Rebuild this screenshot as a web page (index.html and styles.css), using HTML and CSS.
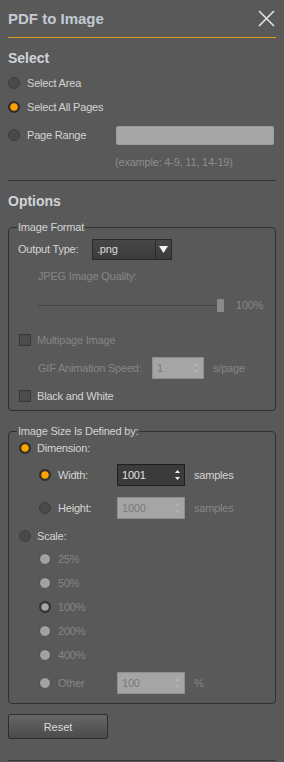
FILE: index.html
```html
<!DOCTYPE html>
<html lang="en">
<head>
    <meta charset="UTF-8">
    <meta name="viewport" content="width=device-width, initial-scale=1.0">
    <title>PDF to Image</title>
    <link rel="stylesheet" href="styles.css">
</head>
<body>
    <div class="panel">
        <header class="title-bar">
            <h1>PDF to Image</h1>
            <button class="close" title="Close">
                <svg width="17" height="17" viewBox="0 0 17 17"><path d="M1 1 L16 16 M16 1 L1 16" stroke="#e2e2e2" stroke-width="1.6" fill="none"/></svg>
            </button>
        </header>

        <h2 class="section-title">Select</h2>
        <label class="row sel r-area"><span class="radio"></span>Select Area</label>
        <label class="row sel"><span class="radio on"></span>Select All Pages</label>
        <div class="row sel r-range">
            <label class="range-label"><span class="radio"></span>Page Range</label>
            <input type="text" class="range-input">
        </div>
        <div class="example">(example: 4-9, 11, 14-19)</div>

        <hr class="divider">

        <h2 class="section-title">Options</h2>

        <fieldset class="group fmt">
            <legend>Image Format</legend>
            <div class="row r-out">
                <span class="out-label">Output Type:</span>
                <div class="dropdown">
                    <span class="dropdown-value">.png</span>
                    <span class="dropdown-btn">
                        <svg width="9" height="7" viewBox="0 0 9 7"><path d="M0 0 H9 L4.5 7 Z" fill="#f2f2f2"/></svg>
                    </span>
                </div>
            </div>
            <div class="row r-jpeg disabled">JPEG Image Quality:</div>
            <div class="row r-slider">
                <div class="slider"><span class="thumb"></span></div>
                <span class="slider-val disabled">100%</span>
            </div>
            <label class="row r-multi disabled"><span class="check"></span>Multipage Image</label>
            <div class="row r-gif">
                <span class="gif-label disabled">GIF Animation Speed:</span>
                <div class="spin off gif-spin">
                    <span class="spin-val">1</span>
                    <span class="spin-arrows">
                        <svg width="7" height="14" viewBox="0 0 7 14"><path d="M1 5 L3.5 2 L6 5 Z M1 9 L3.5 12 L6 9 Z" fill="#b4b4b4"/></svg>
                    </span>
                </div>
                <span class="unit disabled">s/page</span>
            </div>
            <label class="row r-bw"><span class="check"></span>Black and White</label>
        </fieldset>

        <fieldset class="group size">
            <legend>Image Size Is Defined by:</legend>
            <label class="row r-dim"><span class="radio on"></span>Dimension:</label>
            <div class="row sub r-width">
                <label class="sub-label"><span class="radio on"></span>Width:</label>
                <div class="spin">
                    <span class="spin-val">1001</span>
                    <span class="spin-arrows">
                        <svg width="7" height="14" viewBox="0 0 7 14"><path d="M1 5 L3.5 2 L6 5 Z M1 9 L3.5 12 L6 9 Z" fill="#f0f0f0"/></svg>
                    </span>
                </div>
                <span class="unit">samples</span>
            </div>
            <div class="row sub r-height">
                <label class="sub-label"><span class="radio"></span>Height:</label>
                <div class="spin off">
                    <span class="spin-val">1000</span>
                    <span class="spin-arrows">
                        <svg width="7" height="14" viewBox="0 0 7 14"><path d="M1 5 L3.5 2 L6 5 Z M1 9 L3.5 12 L6 9 Z" fill="#b4b4b4"/></svg>
                    </span>
                </div>
                <span class="unit disabled">samples</span>
            </div>
            <label class="row r-scale"><span class="radio"></span>Scale:</label>
            <label class="row sub scale-opt r-first disabled"><span class="radio off"></span>25%</label>
            <label class="row sub scale-opt disabled"><span class="radio off"></span>50%</label>
            <label class="row sub scale-opt disabled"><span class="radio off on"></span>100%</label>
            <label class="row sub scale-opt disabled"><span class="radio off"></span>200%</label>
            <label class="row sub scale-opt disabled"><span class="radio off"></span>400%</label>
            <div class="row sub r-other">
                <label class="sub-label disabled"><span class="radio off"></span>Other</label>
                <div class="spin off">
                    <span class="spin-val">100</span>
                    <span class="spin-arrows">
                        <svg width="7" height="14" viewBox="0 0 7 14"><path d="M1 5 L3.5 2 L6 5 Z M1 9 L3.5 12 L6 9 Z" fill="#b4b4b4"/></svg>
                    </span>
                </div>
                <span class="unit disabled">%</span>
            </div>
        </fieldset>

        <button class="reset">Reset</button>

        <hr class="divider bottom">
    </div>
</body>
</html>
```

FILE: styles.css
```css
* {
    box-sizing: border-box;
}
body {
    margin: 0;
    background-color: #595959;
    color: #d4d4d4;
    font-family: "Liberation Sans", Arial, sans-serif;
    font-size: 11px;
    letter-spacing: -0.2px;
}
.panel {
    padding: 0 8px;
}
.title-bar {
    height: 38px;
    display: flex;
    align-items: center;
    justify-content: space-between;
    border-bottom: 1px solid #e39a20;
}
.title-bar h1 {
    margin: 0;
    font-size: 15px;
    font-weight: bold;
    letter-spacing: 0;
    color: #c3cad2;
}
.close {
    background: none;
    border: none;
    padding: 0;
    margin-right: 1px;
    display: flex;
    cursor: pointer;
}
.section-title {
    margin: 10px 0 0;
    font-size: 14px;
    line-height: 20px;
    font-weight: bold;
    letter-spacing: 0;
    color: #cfd4d9;
}
.row {
    display: flex;
    align-items: center;
    height: 24px;
}
.sel .radio {
    margin-right: 7px;
}
.r-area { margin-top: 3px; }
.r-range { margin-top: 4px; }
.range-label {
    display: flex;
    align-items: center;
    width: 108px;
}
.range-input {
    width: 158px;
    height: 19px;
    border: 1px solid #9c9c9c;
    border-radius: 2px;
    background-color: #a6a6a6;
}
.example {
    margin-top: 5px;
    height: 20px;
    line-height: 20px;
    padding-left: 107px;
    color: #8c8c8c;
}
.divider {
    margin: 8px 0 0;
    border: none;
    border-top: 1px solid #343434;
}
.divider.bottom {
    margin-top: 21px;
}

/* radios and checkboxes */
.radio {
    flex: none;
    width: 12px;
    height: 12px;
    border-radius: 50%;
    background-color: #4a4a4a;
    border: 1px solid #3e3e3e;
}
.radio.on {
    border: 2px solid #2f2f2f;
    background: radial-gradient(circle, #ffa300 0 3.4px, #6b4a10 4px);
}
.radio.off {
    background-color: #a2a2a2;
    border: 1px solid #4c4c4c;
}
.radio.off.on {
    border: 2px solid #333;
    background: radial-gradient(circle, #a8a8a8 0 3px, #6e6e6e 4px);
}
.check {
    flex: none;
    width: 12px;
    height: 12px;
    margin: 0 6px 0 1px;
    background-color: #4c4c4c;
    border: 1px solid #383838;
}
.disabled {
    color: #868686;
}

/* groups */
.group {
    margin: 9px 0 0;
    padding: 0 8px 2px 9px;
    border: 1px solid #303030;
    border-radius: 4px;
    min-width: 0;
}
.group legend {
    padding: 0 1px;
    margin-left: -1px;
    line-height: 14px;
    font-size: 11px;
}
.size {
    margin-top: 13px;
    padding-bottom: 9px;
}
.r-out { margin-top: 3px; }
.out-label {
    width: 74px;
}
.dropdown {
    display: flex;
    width: 80px;
    height: 21px;
    border: 1px solid #2a2a2a;
    background: linear-gradient(#474747, #3b3b3b);
}
.dropdown-value {
    flex: 1;
    padding-left: 4px;
    line-height: 19px;
    color: #dcdcdc;
}
.dropdown-btn {
    width: 16px;
    border-left: 1px solid #2a2a2a;
    display: flex;
    align-items: center;
    justify-content: center;
}
.r-jpeg {
    margin-top: 3px;
    padding-left: 20px;
}
.r-slider {
    margin-top: 5px;
    padding-left: 20px;
}
.slider {
    position: relative;
    width: 187px;
    height: 13px;
    background: linear-gradient(transparent 6px, #444 6px, #444 7px, transparent 7px);
}
.thumb {
    position: absolute;
    left: 179px;
    top: 0;
    width: 7px;
    height: 13px;
    border-radius: 1px;
    background-color: #8a8a8a;
}
.slider-val {
    margin-left: 11px;
}
.r-multi { margin-top: 11px; }
.r-gif { margin-top: 4px; }
.gif-label {
    padding-left: 20px;
    width: 134px;
}
.r-bw { margin-top: 4px; }

/* spin boxes */
.spin {
    display: flex;
    align-items: center;
    width: 68px;
    height: 22px;
    border: 1px solid #1f1f1f;
    background-color: #3b3b3b;
    color: #e0e0e0;
}
.spin.off {
    border-color: #8e8e8e;
    background-color: #a5a5a5;
    color: #7a7a7a;
}
.gif-spin {
    width: 52px;
}
.spin-val {
    flex: 1;
    padding-left: 4px;
}
.spin-arrows {
    display: flex;
    width: 14px;
    justify-content: center;
}
.unit {
    margin-left: 9px;
}

.r-dim {
    height: 20px;
}
.r-dim .radio,
.r-scale .radio {
    margin: 0 6px 0 1px;
}
.sub {
    padding-left: 21px;
}
.sub .radio {
    margin-right: 7px;
}
.sub-label {
    display: flex;
    align-items: center;
    width: 78px;
}
.r-width {
    height: 22px;
    margin-top: 6px;
}
.r-height {
    height: 22px;
    margin-top: 11px;
}
.r-scale {
    height: 20px;
    margin-top: 7px;
}
.scale-opt {
    height: 20px;
    margin-top: 4px;
}
.scale-opt.r-first {
    margin-top: 3px;
}
.r-other {
    height: 22px;
    margin-top: 7px;
}

.reset {
    display: block;
    margin-top: 10px;
    width: 100px;
    height: 25px;
    border: 1px solid #2e2e2e;
    border-radius: 2px;
    background: linear-gradient(#666, #4b4b4b);
    color: #dcdcdc;
    font-family: inherit;
    font-size: 11px;
    cursor: pointer;
}
.reset:hover {
    background: linear-gradient(#6d6d6d, #525252);
}
```
